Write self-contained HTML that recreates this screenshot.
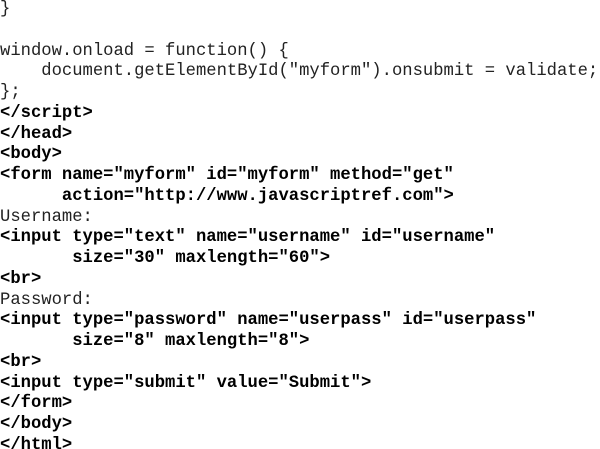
<!DOCTYPE html>
<html><head><style>
html,body{margin:0;padding:0;background:#fff;width:600px;height:449px;overflow:hidden}
pre{margin:0;padding:0;font-family:"Liberation Mono",monospace;font-size:17.2px;line-height:20.75px;color:#222;white-space:pre}
b{color:#000}
</style></head><body><pre>}

window.onload = function() {
    document.getElementById("myform").onsubmit = validate;
};
<b>&lt;/script&gt;</b>
<b>&lt;/head&gt;</b>
<b>&lt;body&gt;</b>
<b>&lt;form name="myform" id="myform" method="get"</b>
<b>      action="http://www.javascriptref.com"&gt;</b>
Username:
<b>&lt;input type="text" name="username" id="username"</b>
<b>       size="30" maxlength="60"&gt;</b>
<b>&lt;br&gt;</b>
Password:
<b>&lt;input type="password" name="userpass" id="userpass"</b>
<b>       size="8" maxlength="8"&gt;</b>
<b>&lt;br&gt;</b>
<b>&lt;input type="submit" value="Submit"&gt;</b>
<b>&lt;/form&gt;</b>
<b>&lt;/body&gt;</b>
<b>&lt;/html&gt;</b></pre></body></html>
